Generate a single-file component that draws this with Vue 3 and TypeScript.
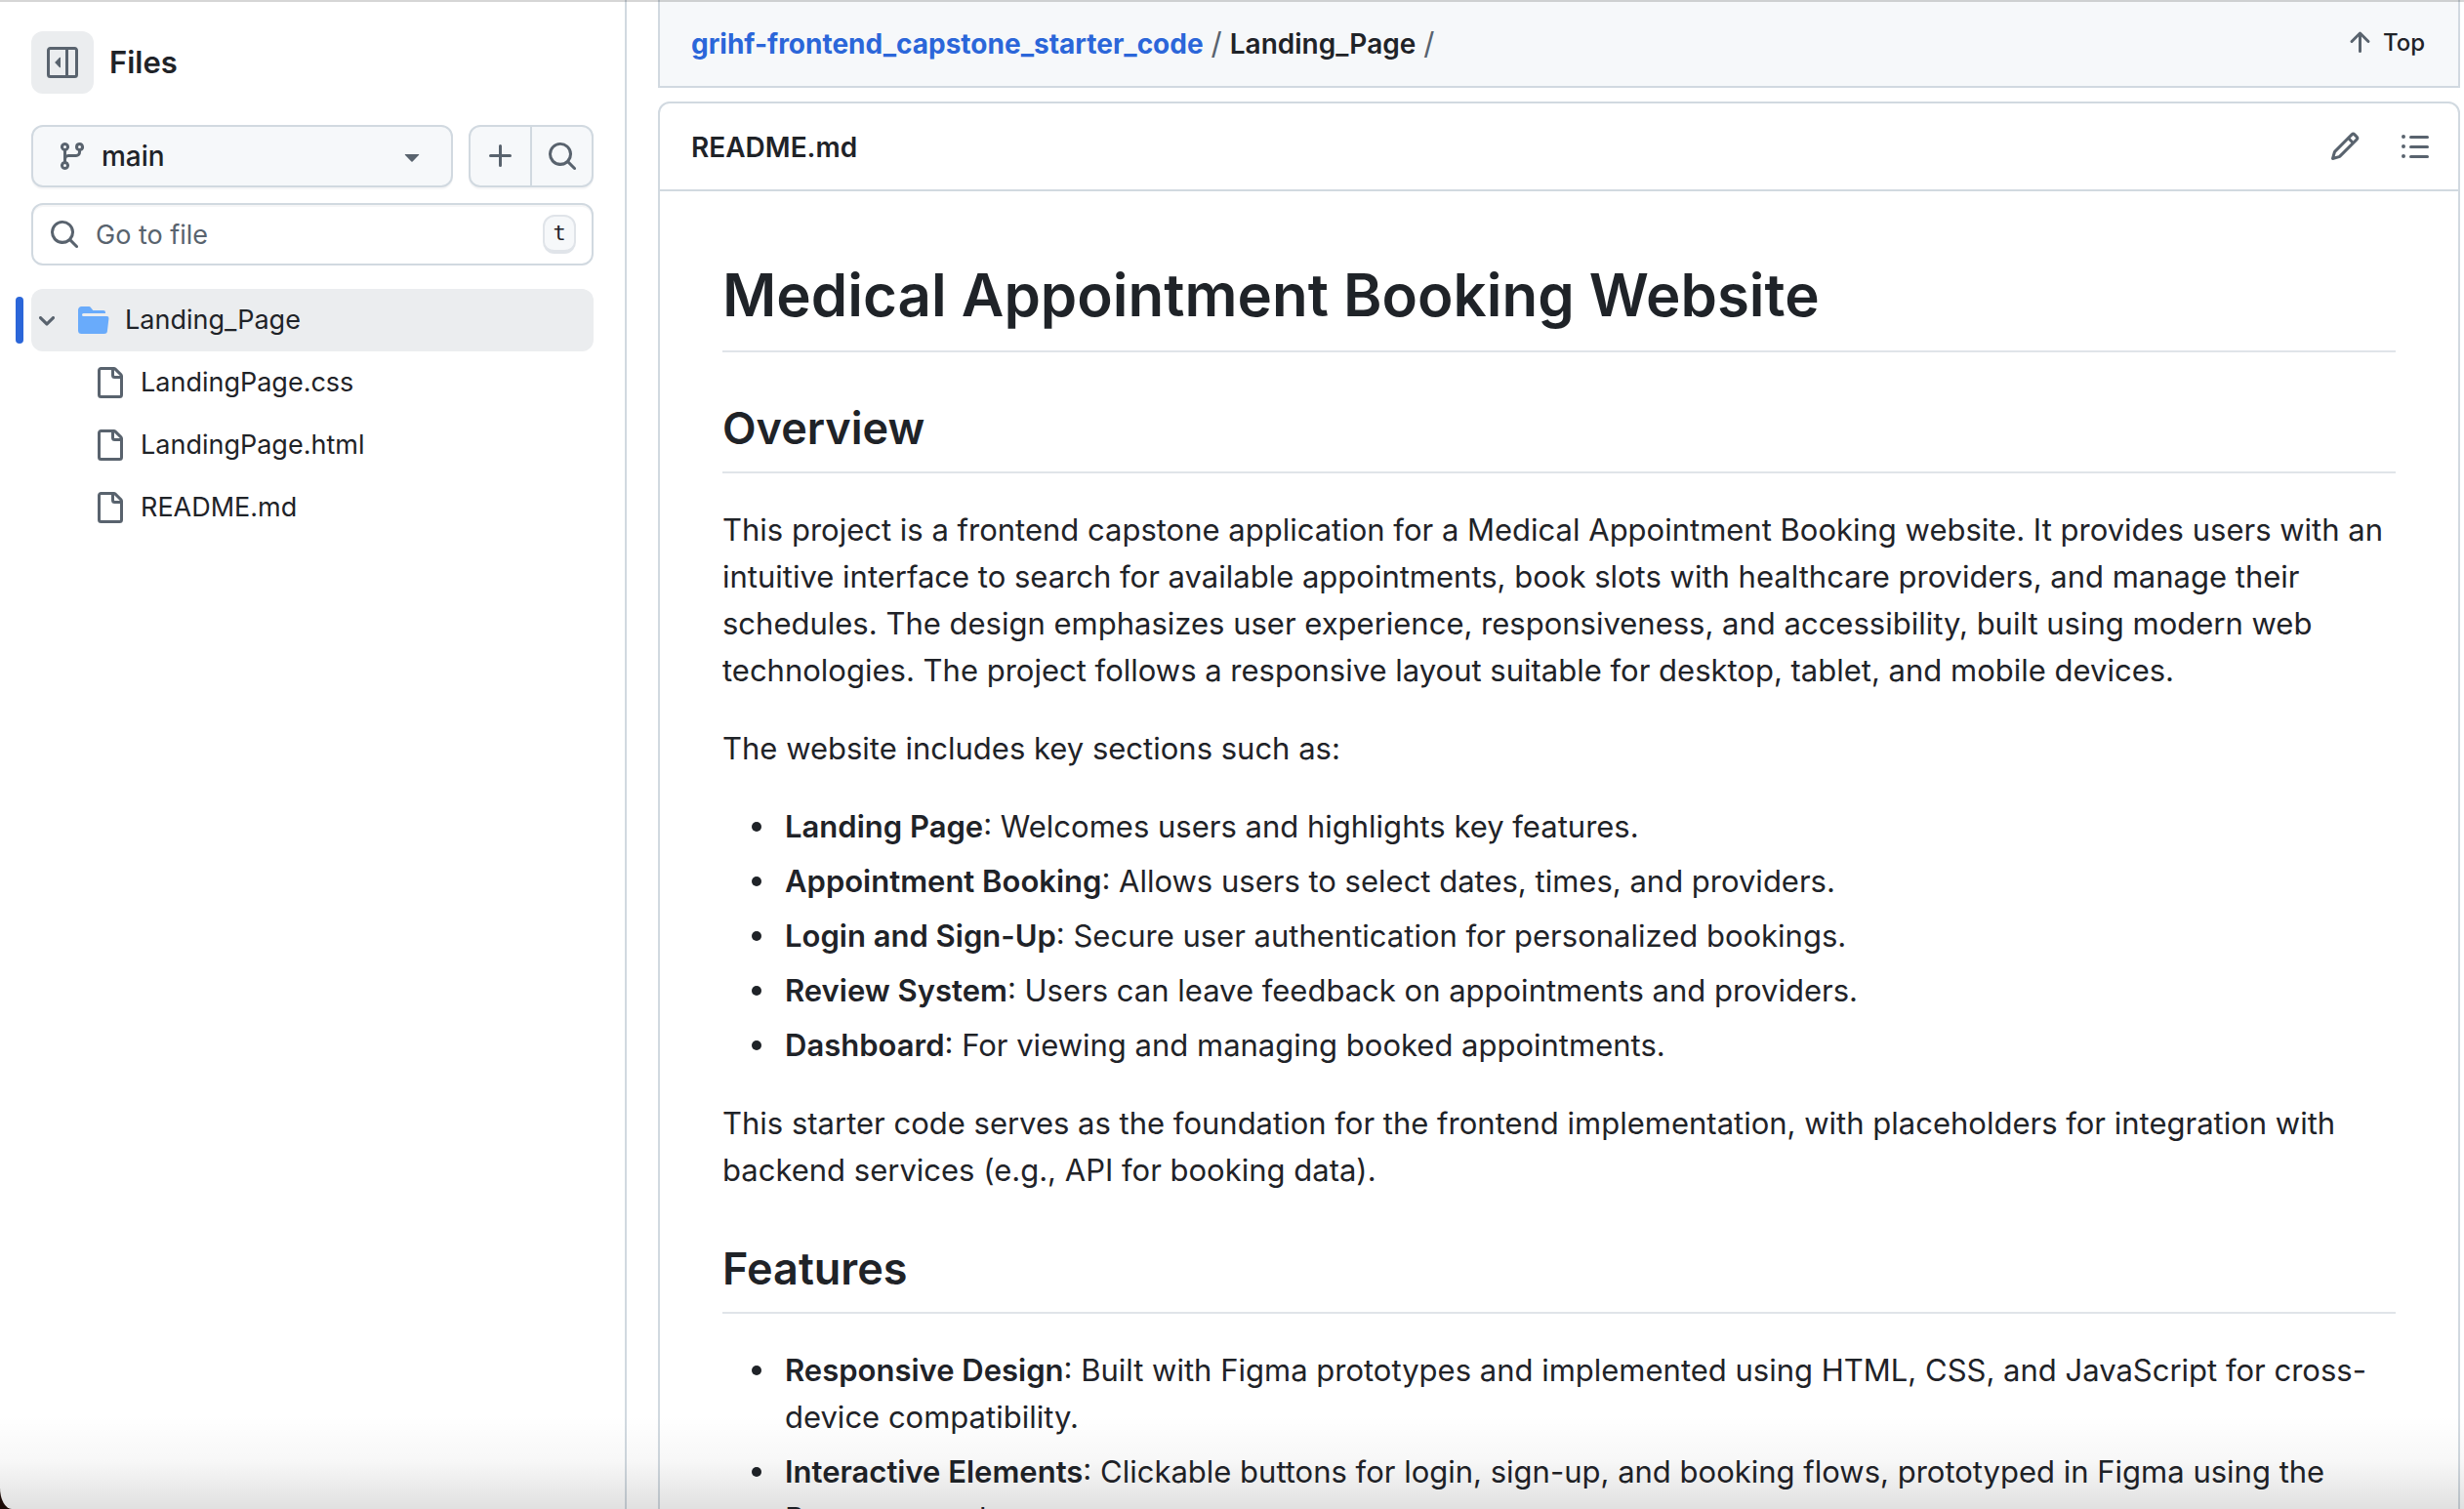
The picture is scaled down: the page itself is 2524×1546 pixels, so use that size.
<script setup lang="ts">
import { ref } from 'vue'

interface Item {
  term: string
  text: string
}

const files: string[] = ['LandingPage.css', 'LandingPage.html', 'README.md']

const sections: Item[] = [
  { term: 'Landing Page', text: 'Welcomes users and highlights key features.' },
  { term: 'Appointment Booking', text: 'Allows users to select dates, times, and providers.' },
  { term: 'Login and Sign-Up', text: 'Secure user authentication for personalized bookings.' },
  { term: 'Review System', text: 'Users can leave feedback on appointments and providers.' },
  { term: 'Dashboard', text: 'For viewing and managing booked appointments.' },
]

const features: Item[] = [
  {
    term: 'Responsive Design',
    text: 'Built with Figma prototypes and implemented using HTML, CSS, and JavaScript for cross-device compatibility.',
  },
  {
    term: 'Interactive Elements',
    text: 'Clickable buttons for login, sign-up, and booking flows, prototyped in Figma using the Prototype tool.',
  },
]

const query = ref('')
</script>

<template>
  <div class="window">
    <aside class="sidebar">
      <div class="side-head">
        <button class="collapse" type="button" aria-label="Collapse file tree">
          <svg class="icon" viewBox="0 0 16 16">
            <path d="m4.177 7.823 2.396-2.396A.25.25 0 0 1 7 5.604v4.792a.25.25 0 0 1-.427.177L4.177 8.177a.25.25 0 0 1 0-.354Z" />
            <path d="M0 1.75C0 .784.784 0 1.75 0h12.5C15.216 0 16 .784 16 1.75v12.5A1.75 1.75 0 0 1 14.25 16H1.75A1.75 1.75 0 0 1 0 14.25Zm1.75-.25a.25.25 0 0 0-.25.25v12.5c0 .138.112.25.25.25H9.5v-13Zm12.5 13a.25.25 0 0 0 .25-.25V1.75a.25.25 0 0 0-.25-.25H11v13Z" />
          </svg>
        </button>
        <h2 class="side-title">Files</h2>
      </div>

      <div class="side-tools">
        <button class="branch" type="button">
          <svg class="icon" viewBox="0 0 16 16">
            <path d="M9.5 3.25a2.25 2.25 0 1 1 3 2.122V6A2.5 2.5 0 0 1 10 8.5H6a1 1 0 0 0-1 1v1.128a2.251 2.251 0 1 1-1.5 0V5.372a2.25 2.25 0 1 1 1.5 0v1.836A2.493 2.493 0 0 1 6 7h4a1 1 0 0 0 1-1v-.628A2.25 2.25 0 0 1 9.5 3.25Zm-6 0a.75.75 0 1 0 1.5 0 .75.75 0 0 0-1.5 0Zm8.25-.75a.75.75 0 1 0 0 1.5.75.75 0 0 0 0-1.5ZM4.25 12a.75.75 0 1 0 0 1.5.75.75 0 0 0 0-1.5Z" />
          </svg>
          <span class="branch-name">main</span>
          <svg class="icon" viewBox="0 0 16 16">
            <path d="m4.427 7.427 3.396 3.396a.25.25 0 0 0 .354 0l3.396-3.396A.25.25 0 0 0 11.396 7H4.604a.25.25 0 0 0-.177.427Z" />
          </svg>
        </button>
        <div class="group">
          <button type="button" aria-label="Add file">
            <svg class="icon" viewBox="0 0 16 16">
              <path d="M7.75 2a.75.75 0 0 1 .75.75V7h4.25a.75.75 0 0 1 0 1.5H8.5v4.25a.75.75 0 0 1-1.5 0V8.5H2.75a.75.75 0 0 1 0-1.5H7V2.75A.75.75 0 0 1 7.75 2Z" />
            </svg>
          </button>
          <button type="button" aria-label="Search this repository">
            <svg class="icon" viewBox="0 0 16 16">
              <path d="M10.68 11.74a6 6 0 0 1-7.922-8.982 6 6 0 0 1 8.982 7.922l3.04 3.04a.749.749 0 0 1-.326 1.275.749.749 0 0 1-.734-.215ZM11.5 7a4.499 4.499 0 1 0-8.997 0A4.499 4.499 0 0 0 11.5 7Z" />
            </svg>
          </button>
        </div>
      </div>

      <label class="search">
        <svg class="icon" viewBox="0 0 16 16">
          <path d="M10.68 11.74a6 6 0 0 1-7.922-8.982 6 6 0 0 1 8.982 7.922l3.04 3.04a.749.749 0 0 1-.326 1.275.749.749 0 0 1-.734-.215ZM11.5 7a4.499 4.499 0 1 0-8.997 0A4.499 4.499 0 0 0 11.5 7Z" />
        </svg>
        <input v-model="query" type="text" placeholder="Go to file" aria-label="Go to file" />
        <kbd>t</kbd>
      </label>

      <ul class="tree">
        <li>
          <a class="row folder" href="#folder">
            <svg class="chevron" viewBox="0 0 12 12">
              <path d="M6 8.825c-.2 0-.4-.1-.5-.2l-3.3-3.3c-.3-.3-.3-.8 0-1.1.3-.3.8-.3 1.1 0l2.7 2.7 2.7-2.7c.3-.3.8-.3 1.1 0 .3.3.3.8 0 1.1l-3.2 3.2c-.2.2-.4.3-.6.3Z" />
            </svg>
            <svg class="icon folder-icon" viewBox="0 0 16 16">
              <path d="M.513 1.513A1.75 1.75 0 0 1 1.75 1h3.5c.55 0 1.07.26 1.4.7l.9 1.2a.25.25 0 0 0 .2.1H13a1 1 0 0 1 1 1v.5H2.75a.75.75 0 0 0 0 1.5h11.978a1 1 0 0 1 .994 1.117L15 13.25A1.75 1.75 0 0 1 13.25 15H1.75A1.75 1.75 0 0 1 0 13.25V2.75c0-.464.184-.91.513-1.237Z" />
            </svg>
            <span>Landing_Page</span>
          </a>
          <ul class="tree-children">
            <li v-for="name in files" :key="name">
              <a class="row file" :href="'#' + name">
                <svg class="icon" viewBox="0 0 16 16">
                  <path d="M2 1.75C2 .784 2.784 0 3.75 0h6.586c.464 0 .909.184 1.237.513l2.914 2.914c.329.328.513.773.513 1.237v9.586A1.75 1.75 0 0 1 13.25 16h-9.5A1.75 1.75 0 0 1 2 14.25Zm1.75-.25a.25.25 0 0 0-.25.25v12.5c0 .138.112.25.25.25h9.5a.25.25 0 0 0 .25-.25V6h-2.75A1.75 1.75 0 0 1 9 4.25V1.5Zm6.75.062V4.25c0 .138.112.25.25.25h2.688l-.011-.013-2.914-2.914-.013-.011Z" />
                </svg>
                <span>{{ name }}</span>
              </a>
            </li>
          </ul>
        </li>
      </ul>
    </aside>

    <main class="content">
      <div class="sticky">
        <nav class="crumbs" aria-label="Breadcrumbs">
          <a href="#root">grihf-frontend_capstone_starter_code</a>
          <span class="slash">/</span>
          <span class="current">Landing_Page</span>
          <span class="slash">/</span>
        </nav>
        <button class="top" type="button">
          <svg class="icon" viewBox="0 0 16 16">
            <path d="M3.47 7.78a.75.75 0 0 1 0-1.06l4.25-4.25a.75.75 0 0 1 1.06 0l4.25 4.25a.751.751 0 0 1-.018 1.042.751.751 0 0 1-1.042.018L9 4.81v7.44a.75.75 0 0 1-1.5 0V4.81L4.53 7.78a.75.75 0 0 1-1.06 0Z" />
          </svg>
          <span>Top</span>
        </button>
      </div>

      <section class="card">
        <header class="card-head">
          <h2>README.md</h2>
          <div class="actions">
            <button type="button" aria-label="Edit file">
              <svg class="icon" viewBox="0 0 16 16">
                <path d="M11.013 1.427a1.75 1.75 0 0 1 2.474 0l1.086 1.086a1.75 1.75 0 0 1 0 2.474l-8.61 8.61c-.21.21-.47.364-.756.445l-3.251.93a.75.75 0 0 1-.927-.928l.929-3.25c.081-.286.235-.547.445-.758l8.61-8.61Zm.176 4.823L9.75 4.81l-6.286 6.287a.253.253 0 0 0-.064.108l-.558 1.953 1.953-.558a.253.253 0 0 0 .108-.064Zm1.238-3.763a.25.25 0 0 0-.354 0L10.811 3.75l1.439 1.44 1.263-1.263a.25.25 0 0 0 0-.354Z" />
              </svg>
            </button>
            <button type="button" aria-label="Outline">
              <svg class="icon" viewBox="0 0 16 16">
                <path d="M5.75 2.5h8.5a.75.75 0 0 1 0 1.5h-8.5a.75.75 0 0 1 0-1.5Zm0 5h8.5a.75.75 0 0 1 0 1.5h-8.5a.75.75 0 0 1 0-1.5Zm0 5h8.5a.75.75 0 0 1 0 1.5h-8.5a.75.75 0 0 1 0-1.5ZM2 14a1 1 0 1 1 0-2 1 1 0 0 1 0 2Zm1-6a1 1 0 1 1-2 0 1 1 0 0 1 2 0ZM2 4a1 1 0 1 1 0-2 1 1 0 0 1 0 2Z" />
              </svg>
            </button>
          </div>
        </header>

        <article class="markdown">
          <h1>Medical Appointment Booking Website</h1>
          <h2>Overview</h2>
          <p>
            This project is a frontend capstone application for a Medical Appointment Booking website. It provides
            users with an intuitive interface to search for available appointments, book slots with healthcare
            providers, and manage their schedules. The design emphasizes user experience, responsiveness, and
            accessibility, built using modern web technologies. The project follows a responsive layout suitable for
            desktop, tablet, and mobile devices.
          </p>
          <p>The website includes key sections such as:</p>
          <ul>
            <li v-for="item in sections" :key="item.term"><strong>{{ item.term }}</strong>: {{ item.text }}</li>
          </ul>
          <p>
            This starter code serves as the foundation for the frontend implementation, with placeholders for
            integration with backend services (e.g., API for booking data).
          </p>
          <h2>Features</h2>
          <ul>
            <li v-for="item in features" :key="item.term"><strong>{{ item.term }}</strong>: {{ item.text }}</li>
          </ul>
        </article>
      </section>
    </main>

    <div class="fade" aria-hidden="true"></div>
  </div>
</template>

<style>
body {
  margin: 0;
  background: #1c0b06;
}
</style>

<style scoped>
.window {
  position: relative;
  box-sizing: border-box;
  display: flex;
  height: 100vh;
  overflow: hidden;
  background: #fff;
  color: #1f2328;
  border-bottom-left-radius: 12px 22px;
  font-family: Inter, 'Liberation Sans', sans-serif;
  font-size: 27px;
  line-height: 40px;
}

.window::before {
  content: '';
  position: absolute;
  inset: 0 0 auto;
  height: 2px;
  background: rgba(0, 0, 0, 0.16);
  z-index: 2;
}

.fade {
  position: absolute;
  inset: auto 0 0;
  height: 96px;
  background: linear-gradient(rgba(0, 0, 0, 0), rgba(0, 0, 0, 0.03) 50%, rgba(0, 0, 0, 0.12));
  pointer-events: none;
}

button {
  display: flex;
  align-items: center;
  justify-content: center;
  margin: 0;
  padding: 0;
  border: 0;
  background: none;
  color: inherit;
  font: inherit;
}

h1,
h2,
ul {
  margin: 0;
  padding: 0;
}

.icon {
  flex: none;
  width: 32px;
  height: 32px;
  fill: #59636e;
}

.sidebar {
  box-sizing: border-box;
  flex: none;
  width: 642px;
  padding: 32px;
  border-right: 2px solid #d1d9e0;
}

.side-head {
  display: flex;
  align-items: center;
  gap: 16px;
  margin-bottom: 32px;
}

.collapse {
  width: 64px;
  height: 64px;
  border-radius: 12px;
  background: #ebedef;
}

.side-title {
  font-size: 31px;
  font-weight: 600;
}

.side-tools {
  display: flex;
  gap: 16px;
  margin-bottom: 16px;
}

.branch {
  box-sizing: border-box;
  flex: 1;
  gap: 14px;
  height: 64px;
  padding: 0 24px;
  border: 2px solid #d1d9e0;
  border-radius: 12px;
  background: #f6f8fa;
  box-shadow: 0 2px 0 rgba(31, 35, 40, 0.04);
  font-size: 28px;
  font-weight: 500;
}

.branch-name {
  flex: 1;
  text-align: left;
}

.group {
  box-sizing: border-box;
  display: flex;
  width: 128px;
  height: 64px;
  border: 2px solid #d1d9e0;
  border-radius: 12px;
  background: #f6f8fa;
  box-shadow: 0 2px 0 rgba(31, 35, 40, 0.04);
}

.group button {
  flex: 1;
}

.group button + button {
  border-left: 2px solid #d1d9e0;
}

.search {
  box-sizing: border-box;
  display: flex;
  align-items: center;
  gap: 16px;
  height: 64px;
  margin-bottom: 24px;
  padding: 0 16px;
  border: 2px solid #d1d9e0;
  border-radius: 12px;
  box-shadow: inset 0 2px 0 rgba(31, 35, 40, 0.04);
}

.search input {
  flex: 1;
  min-width: 0;
  padding: 2px 0 0;
  border: 0;
  outline: 0;
  background: none;
  color: inherit;
  font: inherit;
}

.search input::placeholder {
  color: #59636e;
  opacity: 1;
}

.search kbd {
  box-sizing: border-box;
  width: 34px;
  height: 40px;
  border: 2px solid #e0e4e9;
  border-bottom-width: 4px;
  border-radius: 12px;
  background: #f6f8fa;
  font: 22px/34px 'DejaVu Sans Mono', monospace;
  text-align: center;
}

.tree,
.tree-children {
  list-style: none;
}

.row {
  position: relative;
  display: flex;
  align-items: center;
  gap: 16px;
  height: 64px;
  border-radius: 12px;
  color: inherit;
  text-decoration: none;
}

.folder {
  padding-left: 4px;
  background: #ebedef;
}

.folder::before {
  content: '';
  position: absolute;
  left: -16px;
  width: 8px;
  height: 48px;
  border-radius: 8px;
  background: #2b66d9;
}

.chevron {
  width: 24px;
  height: 24px;
  margin-right: 4px;
  fill: #59636e;
}

.folder-icon {
  fill: #69abfb;
}

.file {
  padding-left: 64px;
}

.content {
  flex: 1;
  min-width: 0;
  padding: 0 4px 0 32px;
}

.sticky {
  display: flex;
  align-items: center;
  justify-content: space-between;
  height: 88px;
  padding: 0 34px 0 32px;
  border: 2px solid #d1d9e0;
  border-top: 0;
  background: #f6f8fa;
}

.crumbs {
  display: flex;
  align-items: center;
  gap: 8px;
  padding-top: 2px;
  font-size: 28px;
  font-weight: 600;
}

.crumbs a {
  color: #2b66d9;
  font-weight: 700;
  text-decoration: none;
}

.slash {
  color: #59636e;
  font-size: 31px;
  font-weight: 400;
}

.top {
  gap: 8px;
  font-size: 24px;
  font-weight: 500;
}

.card {
  margin-top: 14px;
  border: 2px solid #d1d9e0;
  border-radius: 12px 12px 0 0;
}

.card-head {
  display: flex;
  align-items: center;
  justify-content: space-between;
  height: 88px;
  padding: 0 16px 0 32px;
  border-bottom: 2px solid #d1d9e0;
}

.card-head h2 {
  padding-top: 2px;
  font-size: 28px;
  font-weight: 600;
}

.actions {
  display: flex;
  gap: 16px;
}

.actions button {
  width: 56px;
  height: 56px;
}

.markdown {
  padding: 64px;
  font-size: 31px;
  line-height: 48px;
}

.markdown h1,
.markdown h2 {
  border-bottom: 2px solid #e0e4e9;
  font-weight: 600;
}

.markdown h1 {
  margin-bottom: 48px;
  padding: 2px 0 17px;
  font-size: 60px;
  line-height: 80px;
}

.markdown h2 {
  margin: 47px 0 34px;
  padding-bottom: 14px;
  font-size: 45px;
  line-height: 60px;
}

.markdown p {
  margin: 0 0 32px;
}

.markdown ul {
  margin-bottom: 32px;
  padding-left: 64px;
  list-style: none;
}

.markdown li {
  position: relative;
}

.markdown li::before {
  content: '';
  position: absolute;
  top: 19px;
  left: -34px;
  width: 10px;
  height: 10px;
  border-radius: 50%;
  background: #1f2328;
}

.markdown li + li {
  margin-top: 8px;
}

.markdown strong {
  font-weight: 600;
}
</style>
